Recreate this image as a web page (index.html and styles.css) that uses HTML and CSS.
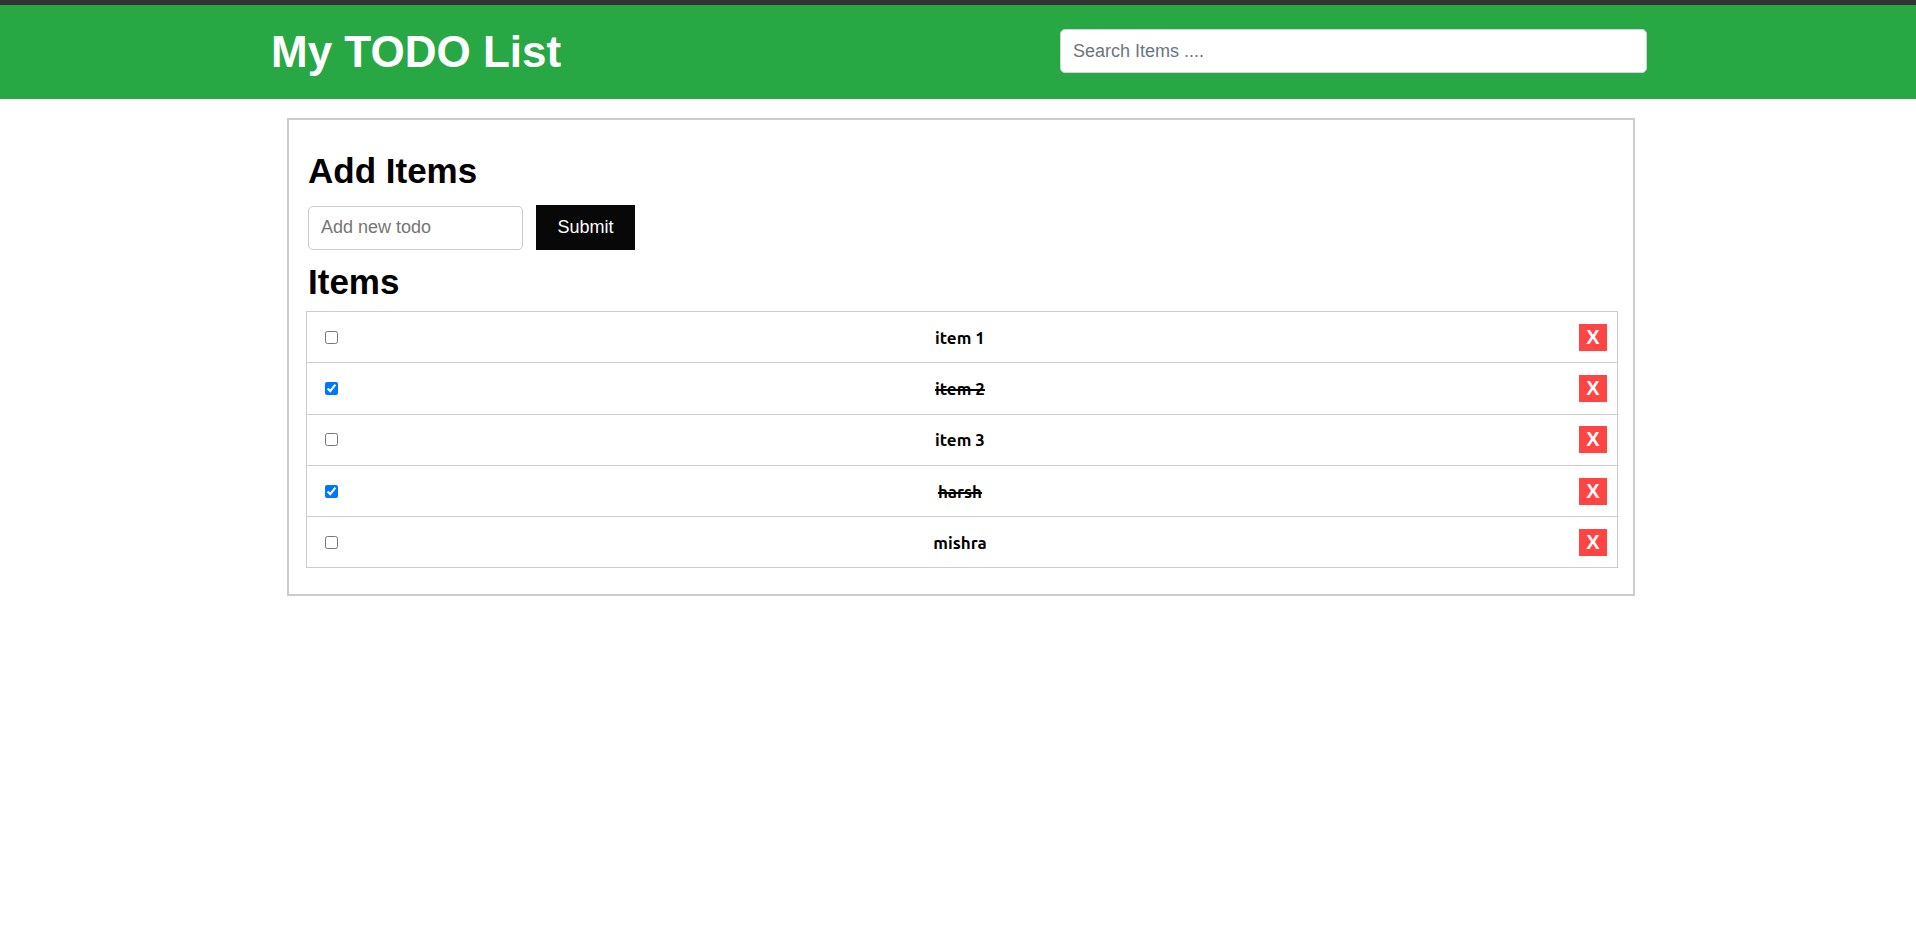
FILE: index.html
```html
<!DOCTYPE html>
<html lang="en">
<head>
<meta charset="utf-8">
<title>My TODO List</title>
<link rel="stylesheet" href="styles.css">
</head>
<body>
<div class="topbar"></div>
<header class="header">
  <h1 class="title">My TODO List</h1>
  <input class="search" type="text" placeholder="Search Items ....">
</header>
<main class="card">
  <h2 class="heading">Add Items</h2>
  <form class="add-form">
    <input class="add-input" type="text" placeholder="Add new todo">
    <button class="submit" type="button">Submit</button>
  </form>
  <h2 class="heading heading-items">Items</h2>
  <ul class="list">
    <li class="row"><input class="check" type="checkbox"><span class="label">item 1</span><button class="del" type="button">X</button></li>
    <li class="row"><input class="check" type="checkbox" checked><span class="label done">item 2</span><button class="del" type="button">X</button></li>
    <li class="row"><input class="check" type="checkbox"><span class="label">item 3</span><button class="del" type="button">X</button></li>
    <li class="row"><input class="check" type="checkbox" checked><span class="label done">harsh</span><button class="del" type="button">X</button></li>
    <li class="row"><input class="check" type="checkbox"><span class="label">mishra</span><button class="del" type="button">X</button></li>
  </ul>
</main>
</body>
</html>
```
FILE: styles.css
```css
html, body {
  margin: 0;
  padding: 0;
  background: #ffffff;
  font-family: "Liberation Sans", Arial, sans-serif;
  color: #000;
}

.topbar {
  height: 5px;
  background: #343434;
}

.header {
  height: 94px;
  background: #28a745;
  display: flex;
  align-items: center;
  justify-content: space-between;
  padding: 0 269px 0 271px;
  box-sizing: border-box;
}

.title {
  margin: 0;
  font-size: 44px;
  font-weight: bold;
  color: #fff;
  line-height: 50px;
}

.search {
  width: 587px;
  height: 44px;
  box-sizing: border-box;
  border: 1px solid #cfd4da;
  border-radius: 5px;
  padding: 0 12px;
  font-family: "Liberation Sans", Arial, sans-serif;
  font-size: 18px;
  color: #495057;
  background: #fff;
  margin-bottom: 2px;
}

.search::placeholder {
  color: #6c757d;
}

.card {
  margin: 19px 281px 0 287px;
  border: 2px solid #cccccc;
  padding: 31px 15px 26px 17px;
}

.heading {
  margin: 0 0 0 2px;
  font-size: 35px;
  line-height: 40px;
  font-weight: bold;
}

.add-form {
  display: flex;
  align-items: center;
  gap: 13px;
  margin: 14px 0 12px 2px;
}

.add-input {
  width: 215px;
  height: 44px;
  box-sizing: border-box;
  border: 1px solid #cccccc;
  border-radius: 5px;
  padding: 0 12px;
  font-family: "Liberation Sans", Arial, sans-serif;
  font-size: 18px;
  background: #fff;
}

.add-input::placeholder {
  color: #757575;
}

.submit {
  width: 99px;
  height: 45px;
  border: none;
  background: #080808;
  color: #fff;
  font-family: "Liberation Sans", Arial, sans-serif;
  font-size: 18px;
  padding: 0;
}

.heading-items {
  margin-bottom: 9px;
}

.list {
  list-style: none;
  margin: 0;
  padding: 0;
  border: 1px solid #cccccc;
}

.row {
  height: 50.3px;
  display: flex;
  align-items: center;
  justify-content: space-between;
  padding: 0 10px 0 14px;
  border-bottom: 1px solid #cccccc;
}

.row:last-child {
  border-bottom: none;
}

.check {
  width: 13px;
  height: 13px;
  margin: 3px 3px 3px 4px;
}

.label {
  font-family: "Ubuntu", "Noto Sans", "DejaVu Sans", sans-serif;
  font-weight: bold;
  font-size: 17px;
}

.label.done {
  text-decoration: line-through;
  text-decoration-thickness: 2px;
}

.del {
  width: 28px;
  height: 27px;
  border: none;
  padding: 0;
  background: #ff4444;
  color: #fff;
  font-family: "Liberation Sans", Arial, sans-serif;
  font-weight: bold;
  font-size: 20px;
  display: flex;
  align-items: center;
  justify-content: center;
}
```
